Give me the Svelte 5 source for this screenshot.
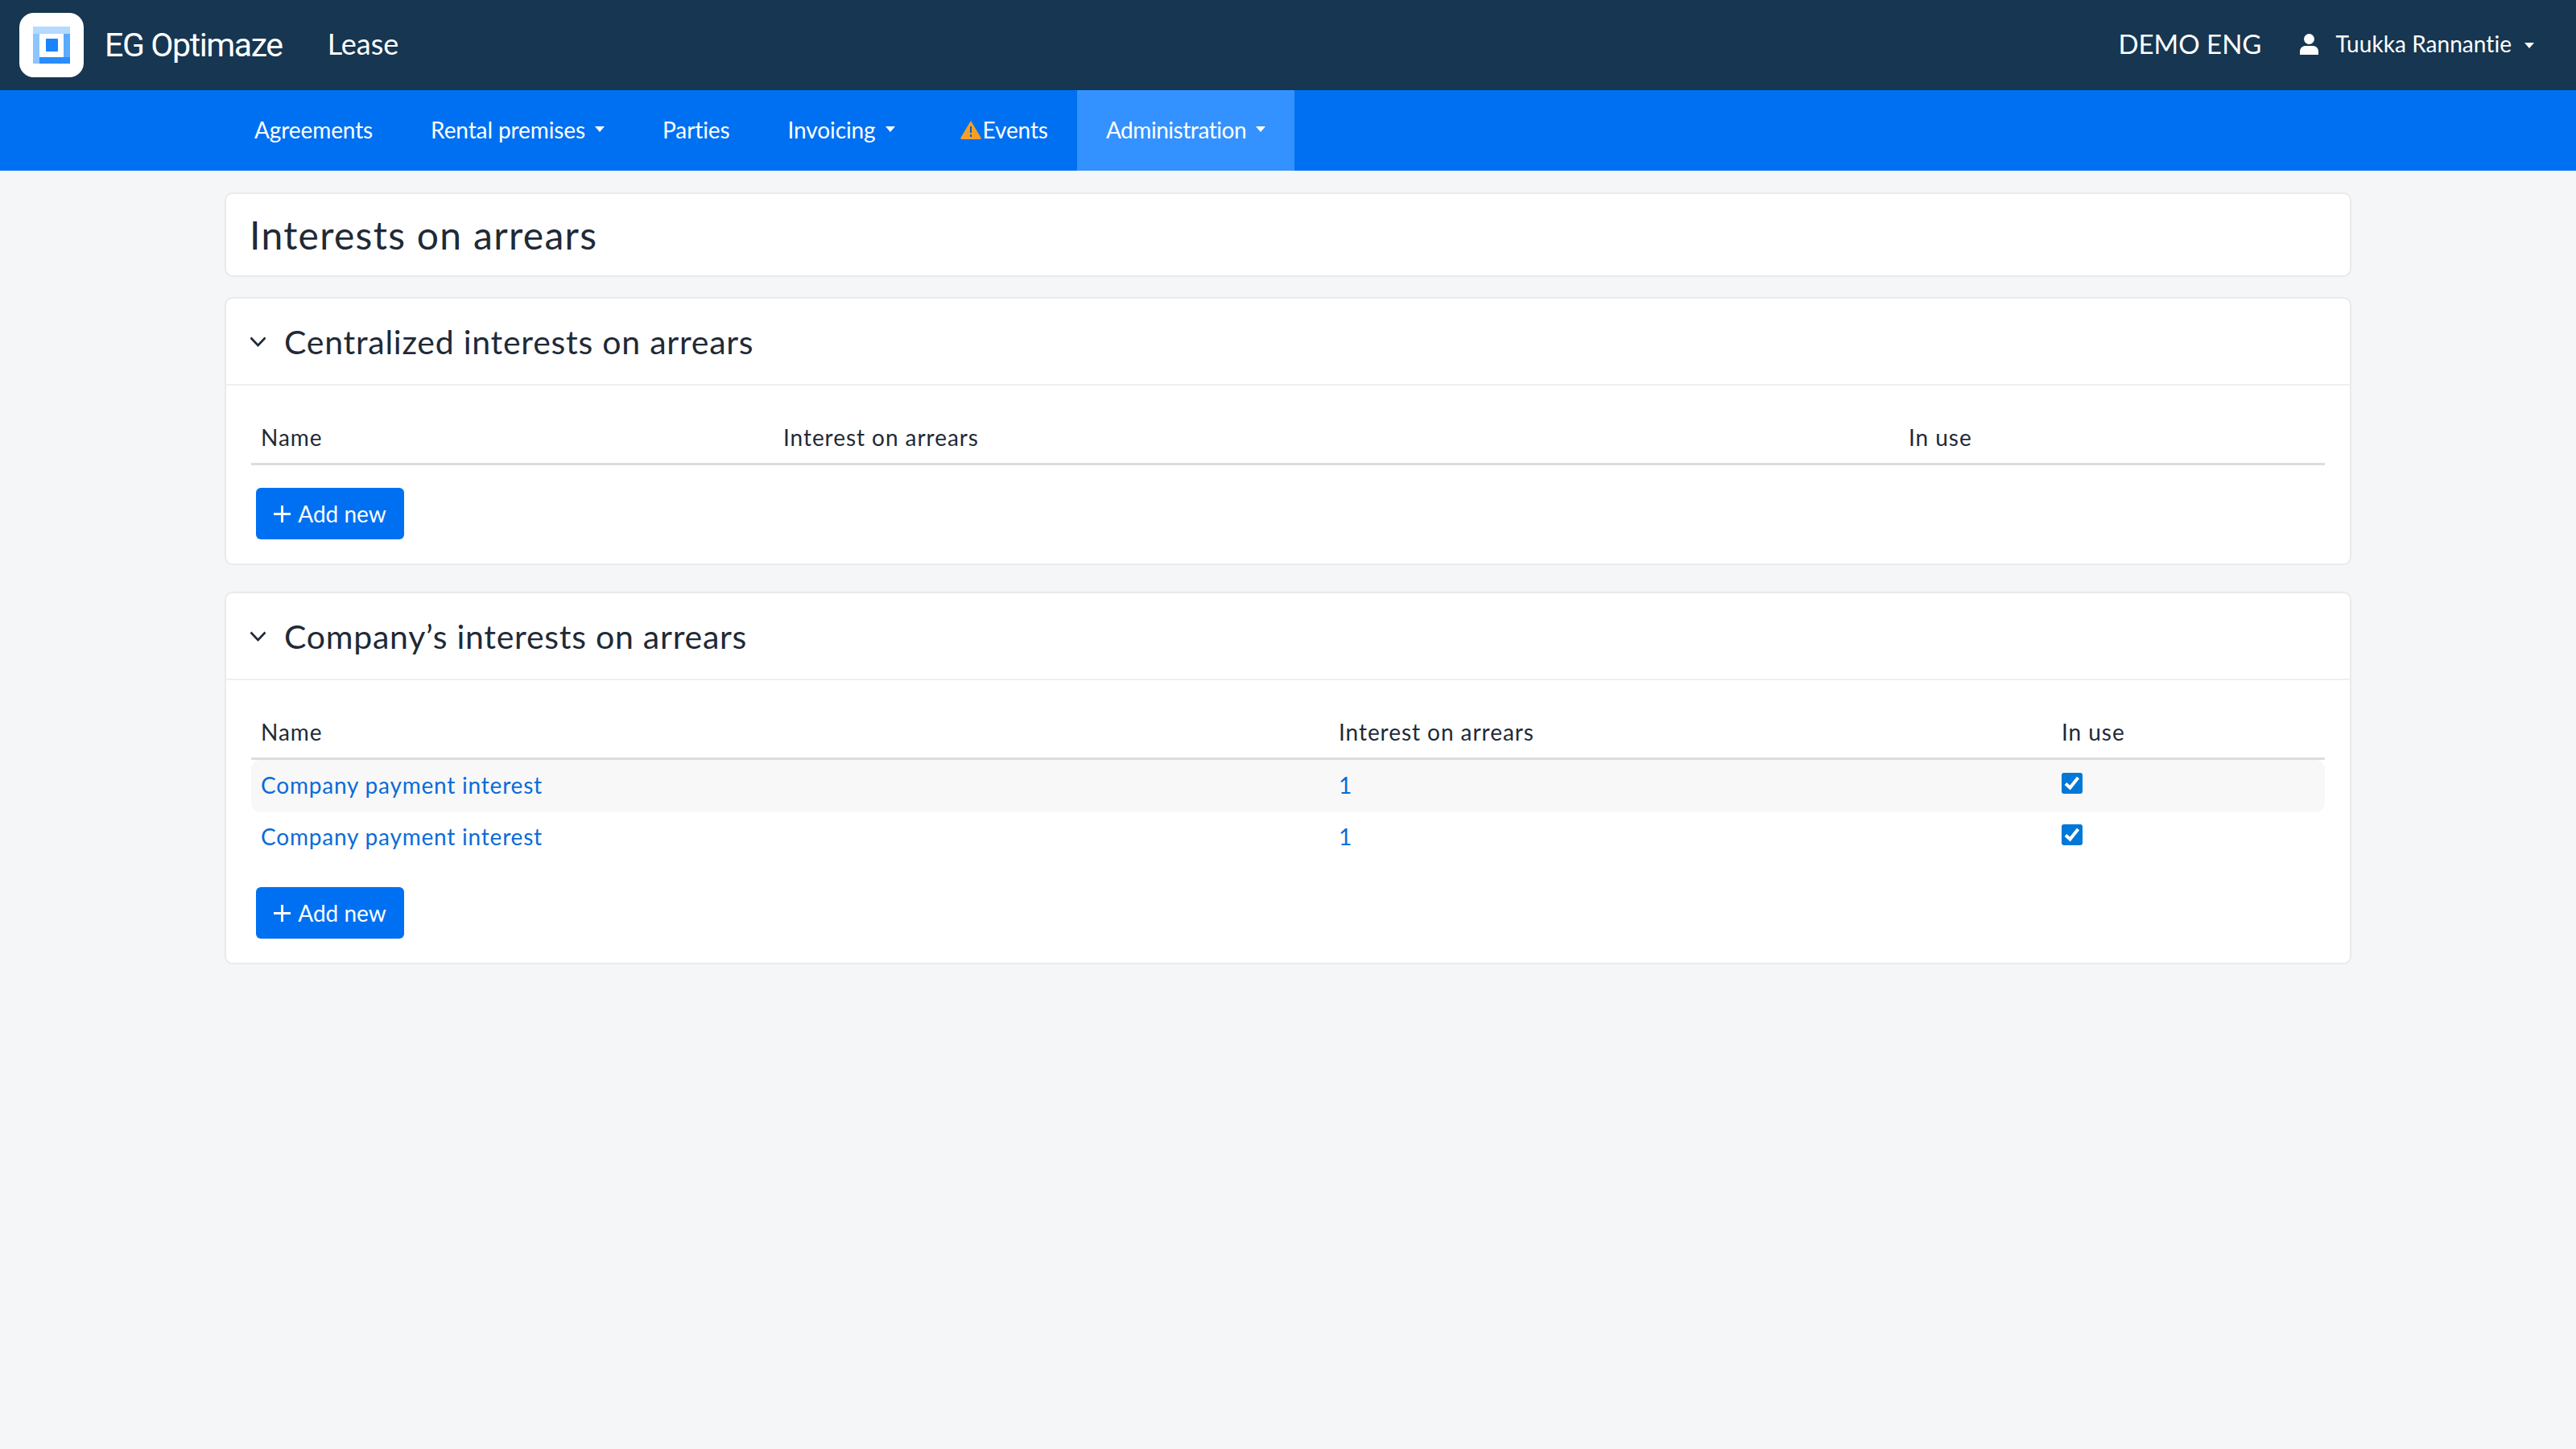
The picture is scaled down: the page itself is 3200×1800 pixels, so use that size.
<script lang="ts">
  type Row = { name: string; value: string }

  const navItems = [
    { label: 'Agreements' },
    { label: 'Rental premises', caret: true },
    { label: 'Parties' },
    { label: 'Invoicing', caret: true },
    { label: 'Events', warn: true },
    { label: 'Administration', caret: true, active: true }
  ]

  const companyRows: Row[] = [
    { name: 'Company payment interest', value: '1' },
    { name: 'Company payment interest', value: '1' }
  ]
</script>

{#snippet caret()}
  <svg class="caret" viewBox="0 0 12 7" width="12" height="7"><path d="M0 0h12L6 7z" fill="currentColor" /></svg>
{/snippet}

{#snippet chevron()}
  <svg class="chevron" viewBox="0 0 21 13" width="21" height="13">
    <path d="M1.500 1.500 10.500 11l9-9.500" fill="none" stroke="#1f2a37" stroke-width="2.6" />
  </svg>
{/snippet}

{#snippet addButton()}
  <button class="add" type="button">
    <svg viewBox="0 0 21 21" width="21" height="21"><path d="M10.500 0v21M0 10.500h21" stroke="#fff" stroke-width="3" /></svg>
    Add new
  </button>
{/snippet}

<header class="top">
  <div class="logo">
    <svg viewBox="0 0 46 46" width="46" height="46">
      <rect x="0" y="0" width="46" height="9" fill="#b5d9ff" />
      <rect x="0" y="9" width="8" height="37" fill="#8cc5ff" />
      <rect x="38" y="9" width="8" height="29" fill="#5aabff" />
      <rect x="8" y="38" width="38" height="8" fill="#2a8cff" />
      <rect x="16" y="15" width="15" height="16" rx="1" fill="#1a84ff" />
    </svg>
  </div>
  <span class="brand">EG Optimaze</span>
  <span class="product">Lease</span>
  <span class="spacer"></span>
  <span class="env">DEMO ENG</span>
  <svg class="user-icon" viewBox="0 0 23 26" width="23" height="26">
    <circle cx="11.500" cy="6.500" r="6.500" fill="#fff" />
    <path d="M0 26v-4c0-4.500 3.500-7 7-7h9c3.500 0 7 2.500 7 7v4z" fill="#fff" />
  </svg>
  <span class="user">Tuukka Rannantie</span>
  {@render caret()}
</header>

<nav class="menu">
  {#each navItems as item}
    <div class="item" class:active={item.active} class:warned={item.warn}>
      {#if item.warn}
        <svg viewBox="0 0 26 24" width="26" height="24">
          <path d="M13 1 25.500 22a1.300 1.300 0 0 1-1 2H1.500a1.300 1.300 0 0 1-1-2z" fill="#f5a024" />
          <path d="M12 8h2v8h-2zM12 18h2v3h-2z" fill="#0a5cc0" />
        </svg>
      {/if}
      <span>{item.label}</span>
      {#if item.caret}{@render caret()}{/if}
    </div>
  {/each}
</nav>

<main class="page">
  <section class="card title-card">
    <h1>Interests on arrears</h1>
  </section>

  <section class="card">
    <div class="card-head">
      {@render chevron()}
      <h2>Centralized interests on arrears</h2>
    </div>
    <div class="card-body">
      <div class="row head central">
        <span>Name</span><span>Interest on arrears</span><span>In use</span>
      </div>
      {@render addButton()}
    </div>
  </section>

  <section class="card company-card">
    <div class="card-head">
      {@render chevron()}
      <h2>Company’s interests on arrears</h2>
    </div>
    <div class="card-body">
      <div class="row head company">
        <span>Name</span><span>Interest on arrears</span><span>In use</span>
      </div>
      {#each companyRows as row, i}
        <div class="row company data" class:odd={i % 2 === 0}>
          <a href="#top">{row.name}</a>
          <a href="#top">{row.value}</a>
          <span class="check">
            <svg viewBox="0 0 26 26" width="26" height="26">
              <rect width="26" height="26" rx="3" fill="#0078d7" />
              <path d="M5 13.500l5.500 5L20.500 6" fill="none" stroke="#fff" stroke-width="4" />
            </svg>
          </span>
        </div>
      {/each}
      {@render addButton()}
    </div>
  </section>
</main>

<style>
  :global(body) {
    margin: 0;
    background: #f5f6f8;
    font-family: Lato, "Open Sans", sans-serif;
    color: #1f2a37;
  }

  .top {
    height: 112px;
    background: #163651;
    color: #fff;
    display: flex;
    align-items: center;
    padding: 0 52px 0 24px;
    box-sizing: border-box;
  }

  .logo {
    width: 80px;
    height: 80px;
    background: #fff;
    border-radius: 18px;
    display: flex;
    align-items: center;
    justify-content: center;
  }

  .brand {
    margin-left: 26px;
    font-family: Roboto, sans-serif;
    font-size: 41px;
    letter-spacing: -1.4px;
  }

  .product {
    margin: 0 0 4px 56px;
    font-size: 36px;
  }

  .spacer {
    flex: 1;
  }

  .env {
    margin-bottom: 4px;
    font-size: 33px;
  }

  .user-icon {
    margin: 0 0 2px 48px;
  }

  .user {
    margin: 0 0 4px 21px;
    font-size: 28px;
    letter-spacing: 0.05px;
  }

  .top .caret {
    margin-left: 16px;
  }

  .menu {
    height: 100px;
    background: #0070f2;
    color: #fff;
    display: flex;
    padding-left: 280px;
    font-size: 28px;
  }

  .item {
    display: flex;
    align-items: center;
    gap: 12px;
    padding: 0 36px 3px;
    box-sizing: border-box;
    letter-spacing: -0.1px;
  }

  .item.warned {
    gap: 2px;
    padding-left: 45px;
  }

  .item.active {
    background: #3392ff;
    letter-spacing: -0.45px;
  }

  .page {
    padding: 27px 0 0 279px;
    width: 2642px;
    display: flex;
    flex-direction: column;
    gap: 25px;
  }

  .card {
    background: #fff;
    border: 2px solid #e9eaec;
    border-radius: 10px;
    box-sizing: border-box;
  }

  .company-card {
    margin-top: 8px;
  }

  .title-card {
    height: 105px;
    padding: 0 29px;
    display: flex;
    align-items: center;
  }

  h1 {
    margin: 0;
    font-size: 48px;
    font-weight: 400;
    letter-spacing: 1.3px;
  }

  h2 {
    margin: 0;
    font-size: 41px;
    font-weight: 400;
    letter-spacing: 0.75px;
  }

  .card-head {
    height: 108px;
    padding: 0 29px;
    display: flex;
    align-items: center;
    gap: 22px;
    border-bottom: 2px solid #eeeff1;
    box-sizing: border-box;
  }

  .card-body {
    padding: 31px 31px 30px;
    font-size: 28px;
  }

  .row {
    display: grid;
    align-items: center;
  }

  .row span,
  .row a {
    padding-left: 12px;
  }

  .row a {
    color: #0a6bd9;
    text-decoration: none;
  }

  .head {
    height: 68px;
    border-bottom: 3px solid #dcdcdc;
    box-sizing: border-box;
    letter-spacing: 0.95px;
  }

  .central {
    grid-template-columns: 649px 1398px 1fr;
  }

  .company {
    grid-template-columns: 1339px 898px 1fr;
  }

  .data {
    height: 66px;
    padding-bottom: 5px;
    box-sizing: border-box;
    letter-spacing: 0.8px;
  }

  .data.odd {
    height: 65px;
    padding-bottom: 3px;
    margin-bottom: -1px;
    background: #f8f8f8;
    border-radius: 12px;
  }

  .check {
    height: 26px;
    line-height: 0;
    margin-top: -4px;
  }

  .add {
    margin: 28px 0 0 6px;
    width: 184px;
    height: 64px;
    border: none;
    border-radius: 6px;
    background: #0070f2;
    color: #fff;
    font: inherit;
    display: flex;
    align-items: center;
    justify-content: center;
    gap: 9px;
    padding: 0;
    white-space: nowrap;
  }
</style>
